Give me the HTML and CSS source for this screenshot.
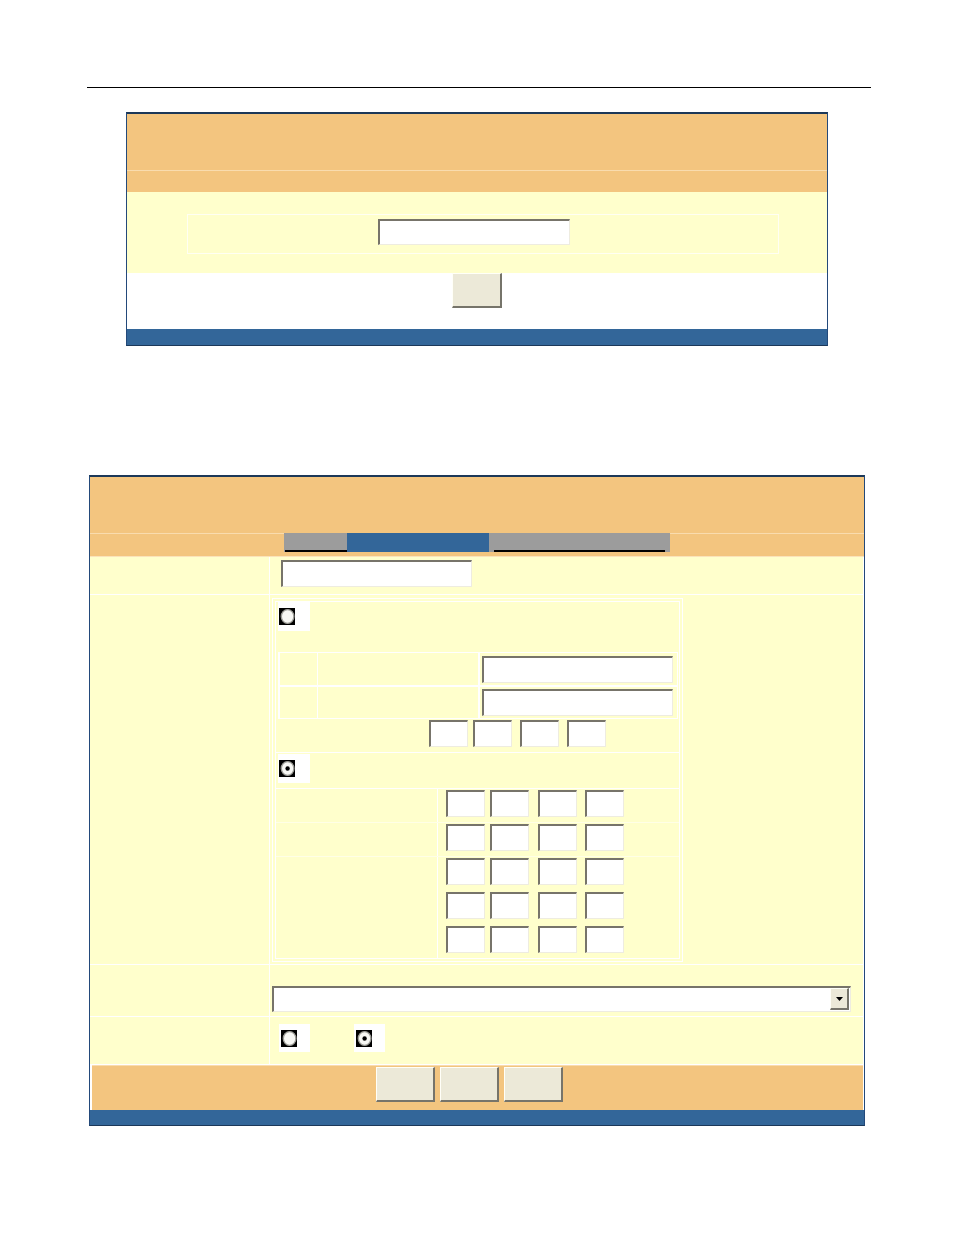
FILE: index.html
```html
<!DOCTYPE html>
<html>
<head>
<meta charset="utf-8">
<title>Form</title>
<link rel="stylesheet" href="styles.css">
</head>
<body>
<div class="rule"></div>

<div class="panel p1">
  <div class="head"></div>
  <div class="subhead"></div>
  <div class="p1-body">
    <div class="p1-frame"><div class="inp w192"></div></div>
  </div>
  <div class="p1-white"><div class="btn b50"></div></div>
  <div class="foot f16"></div>
</div>

<div class="panel p2">
  <div class="head"></div>
  <div class="tabrow">
    <div class="tab grey t1"><div class="ul ul1"></div></div>
    <div class="tab blue t2"></div>
    <div class="tab grey t3"><div class="ul ul3"></div></div>
  </div>
  <div class="rows">
    <div class="row r1">
      <div class="lab"></div>
      <div class="val v1"><div class="inp w191"></div></div>
    </div>
    <div class="row r2">
      <div class="lab"></div>
      <div class="val v2">
        <div class="nest">
          <div class="nest-in">
            <div class="sec-a">
              <div class="rbox">
                <svg width="16" height="17" viewBox="0 0 16 17"><rect width="16" height="17" fill="#000"/><ellipse cx="8.6" cy="8.5" rx="6.3" ry="6.9" fill="#f8f8f4" stroke="#9c9c96" stroke-width="1.4"/></svg>
              </div>
            </div>
            <div class="sub">
              <div class="srow">
                <div class="sc1"></div><div class="sc2"></div><div class="sc3"><div class="inp w191"></div></div>
              </div>
              <div class="srow srow2">
                <div class="sc1"></div><div class="sc2"></div><div class="sc3"><div class="inp w191"></div></div>
              </div>
            </div>
            <div class="sec-c">
              <div class="inp oct"></div><div class="inp oct g5"></div><div class="inp oct g8"></div><div class="inp oct g8"></div>
            </div>
            <div class="sec-d">
              <div class="rbox">
                <svg width="16" height="17" viewBox="0 0 16 17"><rect width="16" height="17" fill="#000"/><ellipse cx="8.6" cy="8.5" rx="6.3" ry="6.9" fill="#f8f8f4" stroke="#9c9c96" stroke-width="1.4"/><circle cx="8.6" cy="8.5" r="2.2" fill="#000"/></svg>
              </div>
            </div>
            <div class="sec-e">
              <div class="grow gl">
                <div class="glab"></div>
                <div class="gval"><div class="inp oct"></div><div class="inp oct g5"></div><div class="inp oct g9"></div><div class="inp oct g8"></div></div>
              </div>
              <div class="grow gl">
                <div class="glab"></div>
                <div class="gval"><div class="inp oct"></div><div class="inp oct g5"></div><div class="inp oct g9"></div><div class="inp oct g8"></div></div>
              </div>
              <div class="grow">
                <div class="glab"></div>
                <div class="gval"><div class="inp oct"></div><div class="inp oct g5"></div><div class="inp oct g9"></div><div class="inp oct g8"></div></div>
              </div>
              <div class="grow">
                <div class="glab"></div>
                <div class="gval"><div class="inp oct"></div><div class="inp oct g5"></div><div class="inp oct g9"></div><div class="inp oct g8"></div></div>
              </div>
              <div class="grow glast">
                <div class="glab"></div>
                <div class="gval"><div class="inp oct"></div><div class="inp oct g5"></div><div class="inp oct g9"></div><div class="inp oct g8"></div></div>
              </div>
            </div>
          </div>
        </div>
      </div>
    </div>
    <div class="row r3">
      <div class="lab"></div>
      <div class="val v3">
        <div class="sel">
          <div class="sel-arrow">
            <svg width="7" height="4" viewBox="0 0 7 4"><path d="M0 0H7L3.5 4Z" fill="#000"/></svg>
          </div>
        </div>
      </div>
    </div>
    <div class="row r4">
      <div class="lab"></div>
      <div class="val v4">
        <div class="rbox rb4">
          <svg width="16" height="17" viewBox="0 0 16 17"><rect width="16" height="17" fill="#000"/><ellipse cx="8.6" cy="8.5" rx="6.3" ry="6.9" fill="#f8f8f4" stroke="#9c9c96" stroke-width="1.4"/></svg>
        </div>
        <div class="rbox rb4 rb4b">
          <svg width="16" height="17" viewBox="0 0 16 17"><rect width="16" height="17" fill="#000"/><ellipse cx="8.6" cy="8.5" rx="6.3" ry="6.9" fill="#f8f8f4" stroke="#9c9c96" stroke-width="1.4"/><circle cx="8.6" cy="8.5" r="2.2" fill="#000"/></svg>
        </div>
      </div>
    </div>
    <div class="p2-foot">
      <div class="btn b59"></div><div class="btn b59 bg"></div><div class="btn b59 bg"></div>
    </div>
  </div>
  <div class="foot f15"></div>
</div>
</body>
</html>
```

FILE: styles.css
```css
* { box-sizing: border-box; }

body {
  margin: 0;
  background: #fff;
  font-family: "Liberation Sans", Arial, sans-serif;
  font-size: 12px;
}

.rule {
  margin: 87px 0 0 87px;
  width: 784px;
  height: 1px;
  background: #000;
}

.panel {
  border-style: solid;
  border-width: 2px 1px 1px 1px;
  border-color: #1c3859 #23497a #1c3859 #23497a;
  background: #fff;
}

.p1 { margin: 24px 0 0 126px; width: 702px; }
.p2 { margin: 129px 0 0 89px; width: 776px; }

.head { height: 56px; background: #f3c57f; }

.subhead {
  height: 22px;
  background: #f3c57f;
  border-top: 1px solid #f9dcae;
}

.p1-body {
  height: 81px;
  background: #ffffcc;
  padding: 22px 0 0 60px;
}

.p1-frame {
  width: 592px;
  height: 40px;
  border: 1px solid #fffff3;
  padding: 4px 0 0 190px;
}

.p1-white {
  height: 56px;
  background: #fff;
  padding-left: 325px;
}

.foot { background: #336699; }
.f16 { height: 16px; }
.f15 { height: 15px; }

/* inputs & buttons */
.inp {
  background: #fff;
  border-style: solid;
  border-width: 2px 1px 1px 2px;
  border-color: #77746a #eeece0 #eeece0 #77746a;
  height: 27px;
}
.w192 { width: 192px; height: 26px; }
.w191 { width: 191px; }
.oct { width: 39px; }
.g5 { margin-left: 5px; }
.g8 { margin-left: 8px; }
.g9 { margin-left: 9px; }

.btn {
  background: #ece9d8;
  border-style: solid;
  border-width: 1px 2px 2px 1px;
  border-color: #fffff8 #76746a #76746a #fffff8;
}
.b50 { width: 50px; height: 35px; }
.b59 { width: 59px; height: 35px; }
.bg { margin-left: 5px; }

/* tabs */
.tabrow {
  height: 23px;
  background: #f3c57f;
  box-shadow: inset 0 1px 0 #f9dcae;
  padding-left: 194px;
  display: flex;
  align-items: flex-start;
}
.tab {
  height: 19px;
  padding-top: 17px;
}
.grey { background: #9c9c9c; }
.blue { background: #336699; }
.t1 { width: 63px; }
.t2 { width: 142px; }
.t3 { width: 181px; }
.ul { height: 2px; background: #000; }
.ul1 { margin-left: 1px; }
.ul3 { margin: 0 5px; }

/* rows */
.rows {
  background: #fff;
  border-top: 1px solid #fbe3ba;
}
.row {
  display: flex;
  border-bottom: 1px solid #fff;
  margin-right: 1px;
}
.lab {
  width: 180px;
  background: #ffffcc;
  border-right: 1px solid #fff;
}
.val {
  flex: 1;
  background: #ffffcc;
}
.r1 { height: 38px; }
.r2 { height: 370px; }
.r3 { height: 52px; }
.r4 { height: 48px; }

.v1 { padding: 3px 0 0 11px; }
.v2 { padding: 3px 0 0 2px; }
.v3 { padding: 21px 0 0 2px; }
.v4 { padding: 7px 0 0 9px; display: flex; align-items: flex-start; }

/* nested box */
.nest {
  width: 411px;
  height: 364px;
  border: 1px solid #fff;
  padding: 2px;
}
.nest-in {
  height: 358px;
  border: 1px solid #fff;
}

.rbox {
  width: 32px;
  height: 29px;
  background: #fff;
  padding: 6px 0 0 1px;
}
.rbox svg { display: block; }
.rb4 { width: 31px; height: 28px; padding: 6px 0 0 2px; }
.rb4b { margin-left: 44px; }

.sec-a { height: 50px; padding-left: 2px; }

.sub {
  height: 67px;
  margin: 0 1px 0 2px;
  background: #fff;
  padding: 1px 0 1px 2px;
  display: flex;
  flex-direction: column;
  gap: 2px;
}
.srow { display: flex; height: 32px; }
.srow2 { height: 31px; }
.sc1 { width: 37px; background: #ffffcc; }
.sc2 { width: 160px; margin-left: 1px; background: #ffffcc; }
.sc3 {
  width: 197px;
  margin-left: 2px;
  background: #ffffcc;
  display: flex;
  align-items: center;
  padding-left: 2px;
}

.sec-c {
  height: 34px;
  border-bottom: 1px solid #fff;
  padding: 1px 0 0 153px;
  display: flex;
  align-items: flex-start;
}

.sec-d {
  height: 36px;
  border-bottom: 1px solid #fff;
  padding: 1px 0 0 2px;
}

.sec-e { height: 169px; }
.grow { display: flex; height: 34px; }
.glast { height: 33px; }
.gl { border-bottom: 1px solid #ffffe6; }
.glab { width: 162px; border-right: 1px solid #fff; }
.gval {
  display: flex;
  align-items: flex-start;
  padding: 1px 0 0 8px;
}

/* select */
.sel {
  width: 579px;
  height: 26px;
  background: #fff;
  border-style: solid;
  border-width: 2px 1px 1px 2px;
  border-color: #77746a #eeece0 #eeece0 #77746a;
  display: flex;
  justify-content: flex-end;
  padding: 0 1px 0 0;
}
.sel-arrow {
  width: 19px;
  height: 22px;
  background: #ece9d8;
  border-style: solid;
  border-width: 1px 2px 2px 1px;
  border-color: #fffff8 #76746a #76746a #fffff8;
  display: flex;
  align-items: center;
  justify-content: center;
}
.sel-arrow svg { display: block; }

/* footer */
.p2-foot {
  height: 45px;
  margin: 0 1px 0 2px;
  background: #f3c57f;
  border-top: 1px solid #f9dcae;
  padding: 1px 0 0 284px;
  display: flex;
  align-items: flex-start;
}
```
